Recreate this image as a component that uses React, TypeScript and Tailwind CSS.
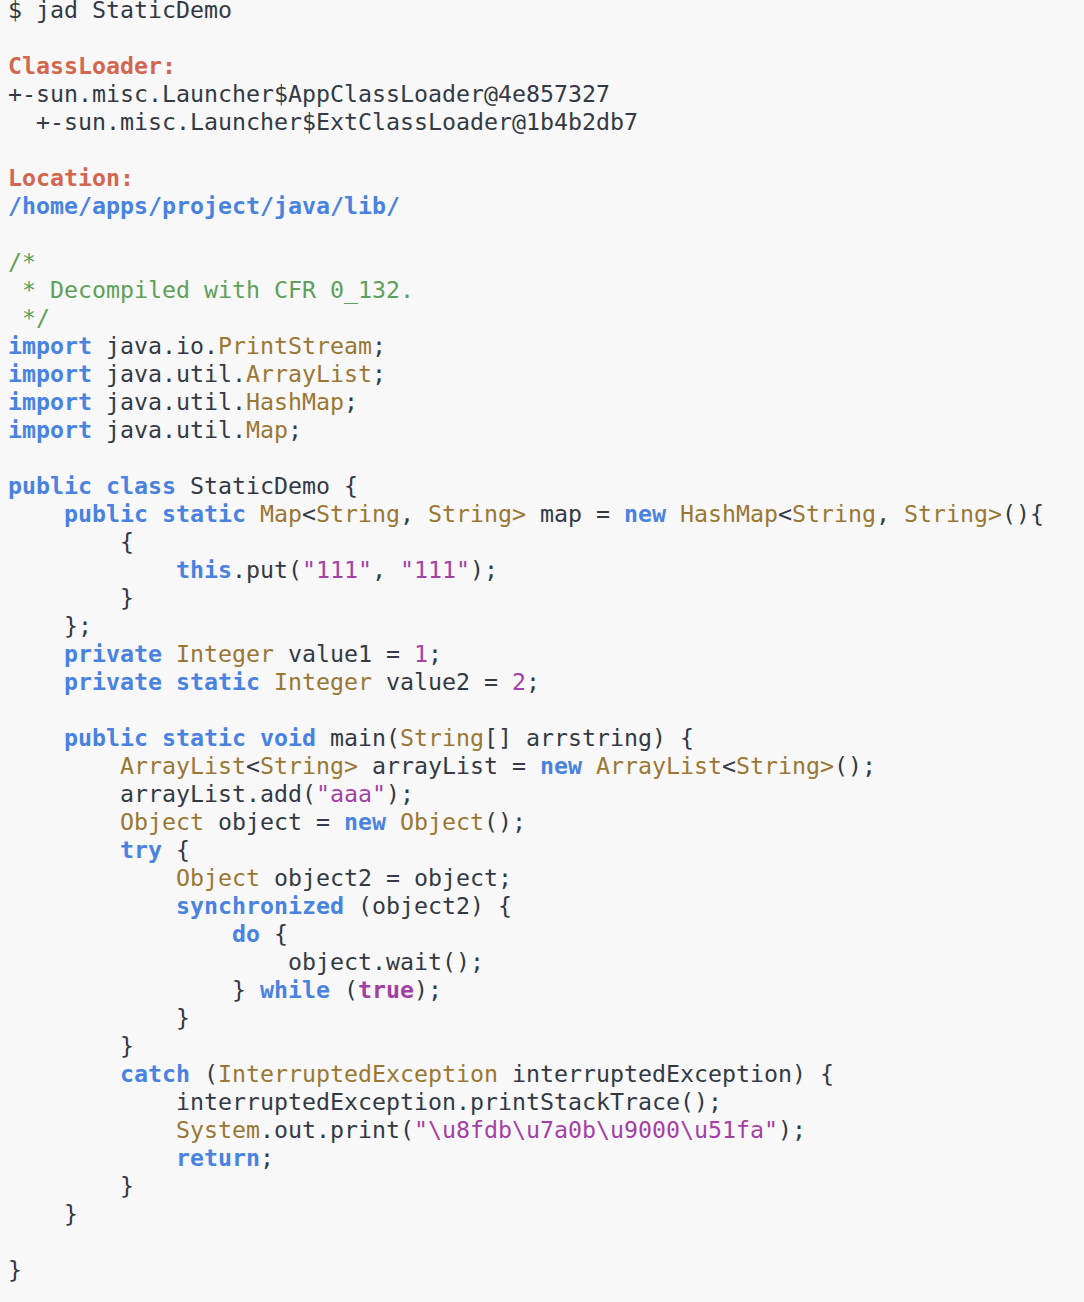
type Seg = [string, string?];

const K = 'text-[#4a82e0] font-bold';
const T = 'text-[#9a7733]';
const S = 'text-[#a43fa6]';
const C = 'text-[#5fa05a]';
const R = 'text-[#d2674f] font-bold';
const P = 'text-[#a43fa6] font-bold';

const lines: Seg[][] = [
  [['$ jad StaticDemo']],
  [],
  [['ClassLoader:', R]],
  [['+-sun.misc.Launcher$AppClassLoader@4e857327']],
  [['  +-sun.misc.Launcher$ExtClassLoader@1b4b2db7']],
  [],
  [['Location:', R]],
  [['/home/apps/project/java/lib/', K]],
  [],
  [['/*', C]],
  [[' * Decompiled with CFR 0_132.', C]],
  [[' */', C]],
  [['import', K], [' java.io.'], ['PrintStream', T], [';']],
  [['import', K], [' java.util.'], ['ArrayList', T], [';']],
  [['import', K], [' java.util.'], ['HashMap', T], [';']],
  [['import', K], [' java.util.'], ['Map', T], [';']],
  [],
  [['public class', K], [' StaticDemo {']],
  [
    ['    '],
    ['public static', K],
    [' '],
    ['Map', T],
    ['<'],
    ['String', T],
    [', '],
    ['String>', T],
    [' map = '],
    ['new', K],
    [' '],
    ['HashMap', T],
    ['<'],
    ['String', T],
    [', '],
    ['String>', T],
    ['(){'],
  ],
  [['        {']],
  [['            '], ['this', K], ['.put('], ['"111"', S], [', '], ['"111"', S], [');']],
  [['        }']],
  [['    };']],
  [['    '], ['private', K], [' '], ['Integer', T], [' value1 = '], ['1', S], [';']],
  [['    '], ['private static', K], [' '], ['Integer', T], [' value2 = '], ['2', S], [';']],
  [],
  [['    '], ['public static void', K], [' main('], ['String', T], ['[] arrstring) {']],
  [
    ['        '],
    ['ArrayList', T],
    ['<'],
    ['String>', T],
    [' arrayList = '],
    ['new', K],
    [' '],
    ['ArrayList', T],
    ['<'],
    ['String>', T],
    ['();'],
  ],
  [['        arrayList.add('], ['"aaa"', S], [');']],
  [['        '], ['Object', T], [' object = '], ['new', K], [' '], ['Object', T], ['();']],
  [['        '], ['try', K], [' {']],
  [['            '], ['Object', T], [' object2 = object;']],
  [['            '], ['synchronized', K], [' (object2) {']],
  [['                '], ['do', K], [' {']],
  [['                    object.wait();']],
  [['                } '], ['while', K], [' ('], ['true', P], [');']],
  [['            }']],
  [['        }']],
  [['        '], ['catch', K], [' ('], ['InterruptedException', T], [' interruptedException) {']],
  [['            interruptedException.printStackTrace();']],
  [['            '], ['System', T], ['.out.print('], ['"\\u8fdb\\u7a0b\\u9000\\u51fa"', S], [');']],
  [['            '], ['return', K], [';']],
  [['        }']],
  [['    }']],
  [],
  [['}']],
];

export default function App() {
  return (
    <div className="min-h-[1302px] w-[1084px] overflow-hidden bg-[#f8f8f8]">
      <pre className="mt-[-4px] pl-2 font-['DejaVu_Sans_Mono',monospace] text-[23.25px] leading-[28px] text-[#333a45]">
        {lines.map((line, i) => (
          <div key={i} className="h-[28px] whitespace-pre">
            {line.map(([text, cls], j) => (
              <span key={j} className={cls}>
                {text}
              </span>
            ))}
          </div>
        ))}
      </pre>
    </div>
  );
}
